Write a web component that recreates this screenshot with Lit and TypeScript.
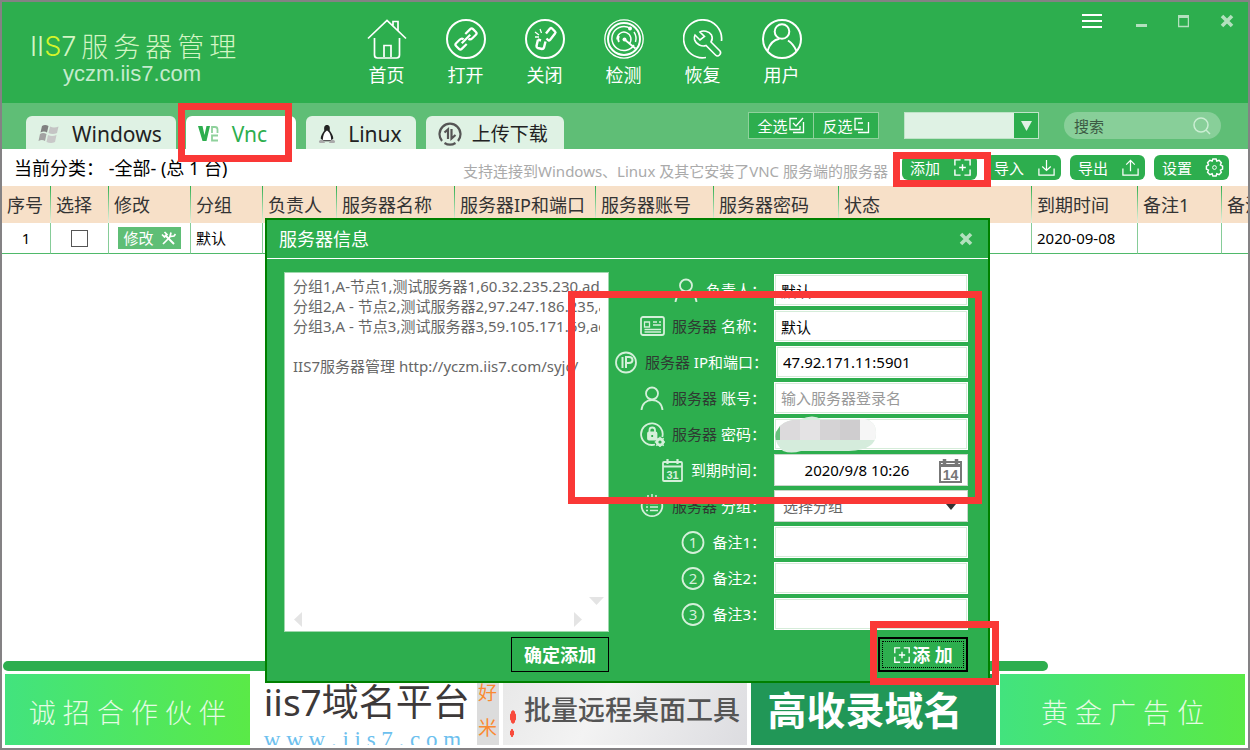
import { LitElement, html, css, svg, nothing } from "lit";
import { customElement, state } from "lit/decorators.js";
import { classMap } from "lit/directives/class-map.js";

const ring = svg`<circle cx="20" cy="20" r="19" stroke-width="2"/>`;

const navIcons: Record<string, unknown> = {
  home: svg`<path d="M1 19.500 20 1.500 39 19.500M26 6.500V2.500h5v9M7.500 19v17q0 3 3 3h19q3 0 3-3V19M17 38V26.500h7V38" stroke-width="1.700"/>`,
  link: svg`${ring}<g transform="rotate(-45 20 20)" stroke-width="2.200"><path d="M17 24H10q-2 0-2-2v-4q0-2 2-2h5q3 0 3 2.500M23 16h7q2 0 2 2v4q0 2-2 2h-5q-3 0-3-2.500M14 20h12"/></g>`,
  unlink: svg`${ring}<g stroke-width="2.400"><path d="m21 14.500 4-5q1-1 2 0l3 3q1 1 0 2L25 21q-1 1-2 0l-1.500-1.500"/><path d="M13 20.500 11.500 27q0 1.500 1.200 2l4.300 1q1.500 0 2-1.500l1.500-6M13 20.500l3 1"/><path d="m15 10 1.500 4M10 13l4 3M10 18h4" stroke-width="1.300"/></g>`,
  radar: svg`<circle cx="20" cy="20" r="19.200" stroke-width="1.300"/><circle cx="20" cy="20" r="16" stroke-width="2"/><path d="M26.500 9.500A12 12 0 1 0 30 26M13 20.500a7 7 0 1 1 12 4.500M30 13a12 12 0 0 1 1.500 10" stroke-width="1.400"/><circle cx="26" cy="9.500" r="2" fill="currentColor" stroke="none"/><circle cx="20.500" cy="20.500" r="2" fill="currentColor" stroke="none"/><path d="m20.500 20.500 11 9M15 23a6 6 0 0 1 0-6" stroke-width="1.800"/>`,
  wrench: svg`<path d="M23 38.500A19 19 0 1 1 38.500 22" stroke-width="1.700"/><path d="M17 13c3-2 9-1 11.500 3 1.500 3 .500 5.500-.500 7l9 9q1.500 2-.500 4t-4 0l-9.500-9.500c-4 1.500-10-1-11.500-6q-.500-2.500.500-4.500l5 5 4.500-3.500z" stroke-width="1.600"/>`,
  user: svg`${ring}<circle cx="20" cy="12.500" r="7.300" stroke-width="2"/><path d="M5.500 32C8 24 12.500 20.500 17.500 19.800M26 21.500c4 2.500 6.500 6 8.500 10.500" stroke-width="2"/>`,
};

const person = svg`<circle cx="12" cy="7.500" r="6"/><path d="M1.500 24C2 17.500 6.500 14 12 14s10 3.500 10.500 10"/>`;
const numbered = (n: string) => svg`<circle cx="13" cy="12.500" r="10.500"/><text x="13" y="18" text-anchor="middle" class="digit">${n}</text>`;

const formIcons: Record<string, unknown> = {
  person,
  card: svg`<rect x="1" y="3" width="23" height="18" rx="2"/><path d="M4.500 8h5v5h-5zM13 8h4M19 8h2M13 11h8M4.500 15.500h16.500M4.500 18h16.500" stroke-width="1.300"/>`,
  ip: svg`<circle cx="13" cy="12.500" r="10"/><path d="M9.500 7v11M13 18V7h3q3.500 0 3.500 3t-3.500 3h-3" stroke-width="2"/>`,
  lock: svg`<path d="M15 22.500A10.800 10.800 0 1 1 22.300 15"/><rect x="8" y="10.500" width="8.500" height="7" rx="1" fill="currentColor"/><path d="M9.500 10.500V8q0-2.500 2.700-2.500T15 8v2.500"/><circle cx="20" cy="20" r="3" stroke-width="2.800"/><path d="M20 14.800v10.400M14.800 20h10.400M16.300 16.300l7.400 7.400M23.700 16.300l-7.400 7.400" stroke-width="1.400"/><circle cx="20" cy="20" r="1.600" class="hole"/><path d="M12.200 13v2" class="cut"/>`,
  calendar: svg`<rect x="4" y="4" width="19" height="19" rx="1"/><path d="M4 8.500h19M8.500 1v5M18.500 1v5" stroke-width="2.200"/><text x="13.500" y="20.500" text-anchor="middle" class="day">31</text>`,
  list: svg`<path d="M6 3.500A10.300 10.300 0 1 0 18 3.500"/><path d="M6 9.500h2M10 9.500h8M6 13h2M10 13h8M6 16.500h2M10 16.500h8M8 1v3M12 0v3M16 1v3" stroke-width="1.500"/>`,
  one: numbered("1"),
  two: numbered("2"),
  three: numbered("3"),
};

const actionIcons: Record<string, unknown> = {
  add: svg`<path d="M8 2H2v6M12 2h6v6M8 18H2v-6M12 18h6v-6M6.500 10h7M10 6.500v7" stroke-width="1.500"/>`,
  import: svg`<path d="M2 11v7h16v-7M10 2v11M5.500 9l4.500 4 4.500-4" stroke-width="1.300"/>`,
  export: svg`<path d="M2 11v7h16v-7M10 14V2.500M5.500 7 10 2.500 14.500 7" stroke-width="1.300"/>`,
  gear: svg`<circle cx="10" cy="10" r="2"/><path d="m8.300 1 3.400 0 .700 2.200 2.500-.800 2.300 2.500-1 2.300L18.500 8.500v3.200l-2.300 1 1 2.300-2.300 2.500-2.500-.900-.700 2.400H8.300l-.800-2.400-2.400.900-2.400-2.500 1-2.300-2.200-1V8.500l2.200-1.300-1-2.300L5.100 2.400l2.400.800z" stroke-width="1.500"/>`,
};

interface Field {
  id: string;
  icon: string;
  subject?: string;
  label: string;
  kind?: "text" | "password" | "date" | "select";
  value?: string;
  placeholder?: string;
}

const fields: Field[] = [
  { id: "owner", icon: "person", label: "负责人：", value: "默认" },
  { id: "name", icon: "card", subject: "服务器", label: "名称：", value: "默认" },
  { id: "address", icon: "ip", subject: "服务器", label: "IP和端口：", value: "47.92.171.11:5901" },
  { id: "account", icon: "person", subject: "服务器", label: "账号：", placeholder: "输入服务器登录名" },
  { id: "password", icon: "lock", subject: "服务器", label: "密码：", kind: "password" },
  { id: "expires", icon: "calendar", label: "到期时间：", kind: "date", value: "2020/9/8 10:26" },
  { id: "group", icon: "list", subject: "服务器", label: "分组：", kind: "select", value: "选择分组" },
  { id: "note1", icon: "one", label: "备注1：" },
  { id: "note2", icon: "two", label: "备注2：" },
  { id: "note3", icon: "three", label: "备注3：" },
];

const columns: [string, number][] = [
  ["序号", 49], ["选择", 58], ["修改", 82], ["分组", 72], ["负责人", 74],
  ["服务器名称", 118], ["服务器IP和端口", 141], ["服务器账号", 118],
  ["服务器密码", 125], ["状态", 193], ["到期时间", 106], ["备注1", 84], ["备注2", 84],
];

const batchText = `分组1,A-节点1,测试服务器1,60.32.235.230,administrator
分组2,A - 节点2,测试服务器2,97.247.186.235,administrator
分组3,A - 节点3,测试服务器3,59.105.171.69,administrator

IIS7服务器管理 http://yczm.iis7.com/syjc/`;

@customElement("app-root")
export class AppRoot extends LitElement {
  @state() private tab = "vnc";

  static styles = css`
    :host {
      --green: #2dae4e;
      --soft: #5fbe76;
      --pale: #dff2e4;
      --red: #fa3836;
      display: block;
      color: #000;
      font-family: "Noto Sans", "Noto Sans CJK SC", sans-serif;
      font-size: 15px;
      line-height: 20px;
    }
    * { box-sizing: border-box; }
    button, input, select, textarea { font: inherit; color: inherit; margin: 0; padding: 0; border: 0; border-radius: 0; outline: 0; }
    button { background: none; display: flex; align-items: center; justify-content: center; white-space: nowrap; }
    svg { display: block; flex: none; fill: none; stroke: currentColor; }
    svg.plain { stroke: none; }
    .window {
      position: relative;
      display: flex;
      flex-direction: column;
      min-height: 100vh;
      border: 2px solid #848284;
      background: #fff;
      overflow: hidden;
    }
    .mark { position: absolute; z-index: 3; border: 7px solid var(--red); pointer-events: none; }

    .header { display: flex; height: 101px; background: var(--green); color: #fff; }
    .logo { width: 345px; padding: 28px 0 0 28px; color: #d3f5c4; }
    .logo-name { display: flex; gap: 5px; align-items: center; font-size: 27px; line-height: 34px; font-weight: 300; }
    .logo-latin { font-family: "Inter", "Open Sans", sans-serif; font-size: 27px; font-weight: 300; }
    .lime { color: #d5f52a; }
    .logo-site { padding-left: 33px; font: 22px/20px "Liberation Sans", sans-serif; color: #c4ebcd; }
    .nav { display: flex; flex: 1; }
    .nav-item { flex-direction: column; justify-content: flex-start; gap: 5px; width: 79px; padding-top: 17px; font-size: 18px; line-height: 22px; }
    .controls { display: flex; align-items: flex-start; gap: 31px; padding: 9px 14px 0 0; color: #b3e0be; }
    .controls button { height: 20px; }
    .menu { color: #fff; margin-right: 3px; }

    .bar { display: flex; justify-content: space-between; height: 46px; padding: 0 27px 0 24px; background: var(--soft); }
    .tabs { display: flex; align-items: flex-end; gap: 10px; }
    .tab { position: relative; gap: 12px; height: 33px; padding: 3px 14px 0 12px; border-radius: 6px 6px 0 0; background: var(--pale); color: #222; font-size: 21px; }
    .tab.cjk { font-size: 19px; gap: 10px; padding-right: 16px; }
    .tab.active { background: #fff; color: var(--green); padding-right: 17px; }
    .transfer { stroke: #555; stroke-width: 2; }
    .mark-tab { left: -8px; top: -13px; width: 114px; height: 59px; }
    .tools { display: flex; align-items: flex-start; padding-top: 9px; }
    .pick { width: 66px; height: 27px; margin-right: -1px; border: 1px solid #8fd19c; background: var(--green); color: #fff; }
    .combo { position: relative; width: 135px; height: 27px; margin: 0 25px 0 26px; }
    .combo select { appearance: none; width: 100%; height: 100%; padding-left: 8px; border: 1px solid #bfe4c8; background: linear-gradient(to left, var(--green) 24px, var(--pale) 24px); }
    .combo svg { position: absolute; right: 7px; top: 9px; fill: var(--pale); stroke: none; pointer-events: none; }
    .search { display: flex; align-items: center; width: 157px; height: 27px; padding: 0 10px; border-radius: 14px; background: #88cf99; color: #cbeed3; }
    .search input { flex: 1; min-width: 0; background: none; color: #333; }
    .search input::placeholder { color: #3c5a44; opacity: 1; }

    .info { display: flex; align-items: center; height: 37px; padding: 0 19px 0 12px; }
    .category { font-size: 18px; white-space: pre; }
    .hint { flex: 1; padding: 6px 14px 0 0; text-align: right; white-space: nowrap; color: #aaa; }
    .actions { display: flex; gap: 9px; }
    .action { position: relative; justify-content: space-between; width: 75px; height: 25px; padding: 0 5px 0 8px; border-radius: 6px; background: var(--green); color: #fff; }
    .mark-add { left: -9px; top: -3px; width: 98px; height: 35px; }

    .grid { flex: 1; overflow: hidden; }
    table { table-layout: fixed; width: 1304px; border-collapse: separate; border-spacing: 0; }
    th { height: 37px; padding: 1px 0 0 5px; background: linear-gradient(var(--green), #eaf3e2) right / 1px 100% no-repeat #f7e0c8; text-align: left; font-size: 18px; font-weight: 400; color: #333; white-space: nowrap; overflow: hidden; }
    td { height: 31px; padding: 0 5px; border-right: 1px solid #86cc98; border-bottom: 1px solid #4fb96a; white-space: nowrap; }
    .center { text-align: center; }
    .tick { appearance: none; display: block; width: 17px; height: 17px; margin: 0 auto; border: 1px solid #555; background: #fff; }
    .tick:checked { background: var(--green); }
    .edit { gap: 7px; width: 63px; height: 22px; margin: 0 auto 0 4px; background: var(--soft); color: #fff; }
    .scroll { padding: 0 1px 3px; }
    .thumb { width: 84%; height: 10px; border-radius: 5px; background: var(--green); }

    .ads { display: grid; grid-template-columns: repeat(5, minmax(0, 1fr)); gap: 4px; padding: 0 3px 3px; }
    .ad { display: flex; align-items: center; justify-content: center; height: 71px; overflow: hidden; text-decoration: none; white-space: nowrap; }
    .ad-lime { background: linear-gradient(to right, #42e37e, #5aea47); color: #e4fbe3; font-size: 27px; font-weight: 300; padding-top: 6px; }
    .ad-domain { align-items: flex-start; justify-content: space-between; padding-left: 10px; color: #3d3939; }
    .domain { display: flex; flex-direction: column; font-size: 37px; line-height: 56px; }
    .domain-site { font: 23px/20px "Liberation Serif", serif; color: #6cc0ee; }
    .rice { display: flex; flex-direction: column; width: 22px; height: 71px; padding-top: 2px; justify-content: space-around; text-align: center; background: #dcdcdc; color: #fa8a32; font-size: 19px; }
    .ad-remote { gap: 8px; background: linear-gradient(120deg, #e8e8e8, #f3f3f3 40%, #dcdce0); color: #555; font-size: 27px; font-weight: 500; }
    .dots { align-self: flex-end; width: 6px; height: 36px; background: radial-gradient(ellipse 3px 7px at 3px 8px, #f84b3c 90%, transparent), radial-gradient(ellipse 3px 4px at 3px 24px, #f84b3c 90%, transparent); }
    .dots { background: radial-gradient(ellipse 3px 7px at 3px 8px, #f84b3c 90%, transparent) top / 6px 16px no-repeat, radial-gradient(ellipse 2px 4px at 2px 8px, #f84b3c 90%, transparent) bottom / 6px 20px no-repeat; }
    .ad-record { justify-content: flex-start; padding-left: 16px; background: #219757; color: #fff; font-size: 39px; font-weight: 700; line-height: 50px; }

    .dialog { position: absolute; z-index: 2; left: calc(50% - 360px); top: 216px; width: 725px; border: 2px solid #008000; background: var(--green); color: #fff; }
    .dialog-head { display: flex; align-items: center; justify-content: space-between; height: 39px; padding: 0 15px 0 12px; border-bottom: 1px solid #fff; font-size: 18px; color: #fff; }
    .dialog-head h2 { margin: 0; font-size: 18px; font-weight: 400; }
    .dialog-head button { color: #b3e0be; }
    .dialog-body { display: flex; justify-content: space-between; padding: 13px 20px 9px 17px; }
    .batch { width: 325px; display: flex; flex-direction: column; gap: 5px; align-items: flex-end; }
    .paper { position: relative; width: 100%; height: 360px; padding: 3px 8px; border: 1px solid #9fd8ad; background: #fff; }
    .paper textarea { display: block; width: 100%; height: 318px; resize: none; overflow: hidden; white-space: pre; background: none; color: #666; }
    .arrow { position: absolute; fill: #e4e4e4; stroke: none; }
    .arrow-left { left: 9px; bottom: 4px; }
    .arrow-right { right: 26px; bottom: 4px; }
    .arrow-down { right: 4px; bottom: 26px; }
    .confirm { width: 98px; height: 35px; border: 1px solid #000; font-size: 18px; font-weight: 700; }
    .details { position: relative; display: flex; flex-direction: column; gap: 4px; padding-top: 2px; }
    .row { display: flex; align-items: center; justify-content: flex-end; height: 32px; }
    .caption { display: flex; align-items: center; margin-right: 8px; white-space: pre; }
    .caption svg { margin-right: 7px; stroke-width: 1.8; color: #d4f0da; }
    .digit { font: 15px "Noto Sans", sans-serif; fill: currentColor; stroke: none; }
    .day { font: bold 11px "Liberation Sans", sans-serif; fill: currentColor; stroke: none; }
    .cut { stroke: var(--green); }
    .hole { fill: var(--green); stroke: none; }
    .subject { color: #2f3a32; }
    .box { position: relative; display: flex; align-items: center; width: 194px; height: 32px; border: 1px solid #fff; background: #fff; box-shadow: inset 0 0 0 1px #d5ecd9; color: #000; }
    .box.dim { border-color: #c9d6cb; box-shadow: none; }
    .box.short { width: 192px; }
    .box input, .box select { flex: 1; width: 100%; min-width: 0; height: 28px; padding: 0 6px; background: none; }
    .box input::placeholder { color: #999; opacity: 1; }
    .box .date { text-align: center; padding: 0 0 0 2px; }
    .box select { appearance: none; padding-left: 8px; color: #666; }
    .day-button { width: 30px; color: #777; padding-right: 4px; }
    .drop { position: absolute; right: 11px; top: 13px; fill: #333; stroke: none; pointer-events: none; }
    .mosaic { position: absolute; left: 0; top: -3px; stroke: none; pointer-events: none; }
    .mark-form { left: -45px; top: 19px; width: 414px; height: 213px; }
    .submit { position: relative; align-self: flex-end; gap: 1px; width: 90px; height: 35px; margin-top: 3px; border: 2px solid #000; outline: 1px dotted #000; outline-offset: -5px; font-size: 18px; font-weight: 700; }
    .mark-submit { left: -10px; top: -18px; width: 129px; height: 64px; }
  `;

  private icon(content: unknown, box: number, size = box) {
    return html`<svg viewBox="0 0 ${box} ${box}" width=${size} height=${size} aria-hidden="true">${content}</svg>`;
  }

  private cross() {
    return this.icon(svg`<path d="m2 2 10 10M12 2 2 12" stroke-width="3.600"/>`, 14);
  }

  private renderHeader() {
    const items = [["home", "首页"], ["link", "打开"], ["unlink", "关闭"], ["radar", "检测"], ["wrench", "恢复"], ["user", "用户"]];
    return html`
      <header class="header">
        <div class="logo">
          <div class="logo-name">
            <span class="logo-latin">II<span class="lime">S</span>7</span>
            <span>服</span><span>务</span><span>器</span><span>管</span><span>理</span>
          </div>
          <div class="logo-site">yczm.iis7.com</div>
        </div>
        <nav class="nav">
          ${items.map(([id, text]) => html`<button class="nav-item">${this.icon(navIcons[id], 40)}${text}</button>`)}
        </nav>
        <div class="controls">
          <button class="menu" aria-label="菜单"><svg width="20" height="14" viewBox="0 0 20 14"><path d="M0 1h20M0 7h20M0 13h20" stroke-width="2"/></svg></button>
          <button aria-label="最小化"><svg width="11" height="16" viewBox="0 0 11 16"><path d="M0 12.500h11" stroke-width="3"/></svg></button>
          <button aria-label="最大化"><svg width="11" height="16" viewBox="0 0 11 16"><path d="M.500 3.500h10v10H.500zM0 3.500h11" stroke-width="1.500"/><path d="M0 3.500h11" stroke-width="3"/></svg></button>
          <button aria-label="关闭">${this.cross()}</button>
        </div>
      </header>`;
  }

  private renderTab(id: string, text: string, picture: unknown, cjk = false) {
    return html`
      <button class=${classMap({ tab: true, cjk, active: this.tab === id })} @click=${() => (this.tab = id)}>
        ${picture}${text}${id === "vnc" ? html`<span class="mark mark-tab"></span>` : nothing}
      </button>`;
  }

  private renderBar() {
    const windows = html`<svg class="plain" width="22" height="20" viewBox="0 0 22 20"><path d="M4 2q3-2 6.500 0L9 8.500q-3-2-6.500 0z" fill="#808080"/><path d="M12 2.500q4 2 8.500 0L19 9q-4 2-8.500 0z" fill="#c4c4c4"/><path d="M2 10q3-2 6.500 0L7 17q-3-2-6.500 0z" fill="#a2a2a2"/><path d="M10 11q4 2 8.500 0L17 18q-4 2-8.500 0z" fill="#c8c8c8"/></svg>`;
    const vnc = html`<svg width="22" height="20" viewBox="0 0 22 20"><path d="M0 2h4.500l2 9 2-9H12L8.500 17h-4z" fill="#2dae4e" stroke="none"/><path d="M14 9V3h3q2.500 0 2.500 2.500V9M20 11.500h-6v5h6" stroke="#8fd19c" stroke-width="1.800"/></svg>`;
    const linux = html`<svg class="plain" width="18" height="20" viewBox="0 0 20 22"><path d="M10 1c-3 0-3.500 2.500-3 6-2 3-4 6-4 9l3 3h8l3-3c0-3-2-6-4-9 .500-3.500 0-6-3-6z" fill="#222"/><path d="M10 7c-2 1-5 5-4.500 11h9C15 12 12 8 10 7z" fill="#fff"/><path d="M1 20q0-3 4-3l3 4H2zM19 20q0-3-4-3l-3 4h6z" fill="#aaa"/></svg>`;
    const transfer = html`<svg class="transfer" width="24" height="24" viewBox="0 0 24 24"><path d="M4 19A10.500 10.500 0 1 1 20 19M17.500 21A10.500 10.500 0 0 1 6.500 21M6.500 10.500l3.500-3V17M13.500 7v9.500l4-3.500" stroke-width="2.200"/></svg>`;
    return html`
      <div class="bar">
        <div class="tabs">
          ${this.renderTab("windows", "Windows", windows)}
          ${this.renderTab("vnc", "Vnc", vnc)}
          ${this.renderTab("linux", "Linux", linux)}
          ${this.renderTab("transfer", "上传下载", transfer, true)}
        </div>
        <div class="tools">
          <button class="pick">全选${this.icon(svg`<path d="M9 1.500H2v11h10V9M5 6l3 3 7-8M15.500 5v10.500H5" stroke-width="1.300"/>`, 17)}</button>
          <button class="pick">反选${this.icon(svg`<path d="M9 1.500H2v11h8M5 6h5M15.500 5v10.500H5" stroke-width="1.300"/>`, 17)}</button>
          <div class="combo">
            <select aria-label="分组筛选"><option></option></select>
            <svg width="11" height="10" viewBox="0 0 11 10"><path d="M0 0h11L5.500 10z"/></svg>
          </div>
          <label class="search">
            <input type="text" placeholder="搜索" aria-label="搜索" />
            ${this.icon(svg`<circle cx="8" cy="8" r="7" stroke-width="1.500"/><path d="m13 13 4 4" stroke-width="1.500"/>`, 18)}
          </label>
        </div>
      </div>`;
  }

  private renderInfo() {
    const actions = [["add", "添加"], ["import", "导入"], ["export", "导出"], ["gear", "设置"]];
    return html`
      <div class="info">
        <span class="category">当前分类： -全部- (总 1 台)</span>
        <span class="hint">支持连接到Windows、Linux 及其它安装了VNC 服务端的服务器</span>
        <div class="actions">
          ${actions.map(([id, text]) => html`
            <button class="action">${text}${this.icon(actionIcons[id], 20, 19)}${id === "add" ? html`<span class="mark mark-add"></span>` : nothing}</button>`)}
        </div>
      </div>`;
  }

  private renderTable() {
    const tools = this.icon(svg`<path d="m4 4 9 9" stroke-width="2"/><path d="M1 3.500 3.500 6 6 3.500 3.500 1M9 6 2 13" stroke-width="1.700"/><path d="M10 1.500 9 5.500l4-.500 1.500-2" stroke-width="1.700"/>`, 15);
    return html`
      <div class="grid">
        <table>
          <colgroup>${columns.map(([, width]) => html`<col width=${width} />`)}</colgroup>
          <thead><tr>${columns.map(([name]) => html`<th>${name}</th>`)}</tr></thead>
          <tbody>
            <tr>
              <td class="center">1</td>
              <td><input class="tick" type="checkbox" aria-label="选择" /></td>
              <td><button class="edit">修改${tools}</button></td>
              <td>默认</td>
              <td></td><td></td><td></td><td></td><td></td><td></td>
              <td>2020-09-08</td>
              <td></td><td></td>
            </tr>
          </tbody>
        </table>
      </div>
      <div class="scroll"><div class="thumb"></div></div>`;
  }

  private renderAds() {
    return html`
      <footer class="ads">
        <a class="ad ad-lime" href="#partner">诚 招 合 作 伙 伴</a>
        <a class="ad ad-domain" href="#domain">
          <span class="domain"><span>iis7域名平台</span><span class="domain-site">w w w . i i s 7 . c o m</span></span>
          <span class="rice"><span>好</span><span>米</span></span>
        </a>
        <a class="ad ad-remote" href="#remote"><span class="dots"></span>批量远程桌面工具</a>
        <a class="ad ad-record" href="#record">高收录域名</a>
        <a class="ad ad-lime" href="#advert">黄 金 广 告 位</a>
      </footer>`;
  }

  private renderControl(field: Field) {
    if (field.kind === "date") {
      return html`<div class="box dim">
        <input id=${field.id} class="date" type="text" .value=${field.value ?? ""} />
        <button type="button" class="day-button" aria-label="选择日期">
          ${this.icon(svg`<rect x="2" y="4" width="21" height="20" stroke-width="2"/><path d="M2 7.500h21" stroke-width="3"/><path d="M6.500 1v5M18.500 1v5" stroke-width="3.500"/><text x="12.500" y="21.500" text-anchor="middle" font-size="14" font-weight="bold" font-family="Liberation Sans" fill="currentColor" stroke="none">14</text>`, 25)}
        </button>
      </div>`;
    }
    if (field.kind === "select") {
      return html`<div class="box dim">
        <select id=${field.id}><option>${field.value}</option></select>
        <svg class="drop" width="10" height="6" viewBox="0 0 10 6"><path d="M0 0h10L5 6z"/></svg>
      </div>`;
    }
    return html`<div class=${classMap({ box: true, short: field.id === "address" })}>
      <input id=${field.id} type=${field.kind ?? "text"} .value=${field.value ?? ""} placeholder=${field.placeholder ?? ""} />
      ${field.kind === "password" ? html`
        <svg class="mosaic" width="102" height="37" viewBox="0 0 102 37">
          <clipPath id="blob"><path d="M5 10Q10 4 26 3Q38-2 46 3H90Q102 6 101 18Q101 34 74 35H26Q16 38 8 35Q-2 26 1 16z"/></clipPath>
          <g clip-path="url(#blob)">
            <path d="M0 0h102v37H0z" fill="#d5ecdc"/><path d="M0 0h5v24H0z" fill="#69c17e"/>
            <path d="M5 4h20v20H5z" fill="#dcdadc"/><path d="M25 4h20v20H25z" fill="#e4e3e4"/>
            <path d="M45 4h20v20H45z" fill="#d5d3d5"/><path d="M65 4h20v20H65z" fill="#cfcdcf"/><path d="M85 0h17v24H85z" fill="#f6f6f6"/>
          </g>
        </svg>` : nothing}
    </div>`;
  }

  private renderDialog() {
    return html`
      <form class="dialog" role="dialog" aria-labelledby="dialog-title" @submit=${(e: Event) => e.preventDefault()}>
        <div class="dialog-head"><h2 id="dialog-title">服务器信息</h2><button type="button" aria-label="关闭">${this.cross()}</button></div>
        <div class="dialog-body">
          <div class="batch">
            <div class="paper">
              <textarea aria-label="批量添加" wrap="off" .value=${batchText}></textarea>
              <svg class="arrow arrow-left" width="8" height="15" viewBox="0 0 8 15"><path d="M8 0v15L0 7.500z"/></svg>
              <svg class="arrow arrow-right" width="8" height="15" viewBox="0 0 8 15"><path d="M0 0v15l8-7.500z"/></svg>
              <svg class="arrow arrow-down" width="15" height="8" viewBox="0 0 15 8"><path d="M0 0h15L7.500 8z"/></svg>
            </div>
            <button type="button" class="confirm">确定添加</button>
          </div>
          <div class="details">
            ${fields.map((field) => html`
              <div class="row">
                <label class="caption" for=${field.id}>${this.icon(formIcons[field.icon], 25, 25)}${field.subject ? html`<span class="subject">${field.subject} </span>` : nothing}${field.label}</label>
                ${this.renderControl(field)}
              </div>`)}
            <button class="submit">${this.icon(actionIcons.add, 20, 18)}添 加<span class="mark mark-submit"></span></button>
            <span class="mark mark-form"></span>
          </div>
        </div>
      </form>`;
  }

  render() {
    return html`
      <main class="window">
        ${this.renderHeader()} ${this.renderBar()} ${this.renderInfo()} ${this.renderTable()} ${this.renderAds()} ${this.renderDialog()}
      </main>`;
  }
}
